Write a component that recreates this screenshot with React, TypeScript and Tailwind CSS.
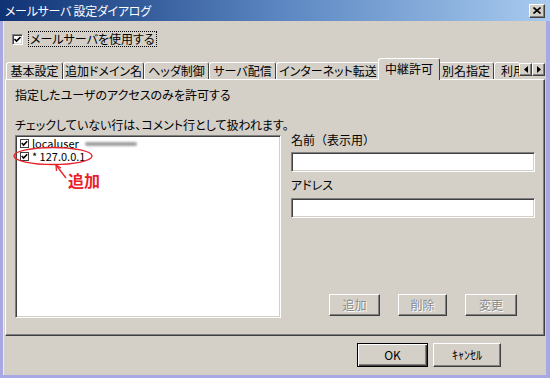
import React from "react";

const raised =
  "border border-t-white border-l-white border-r-[#404040] border-b-[#404040] shadow-[inset_-1px_-1px_#808080]";
const sunken =
  "border border-t-[#808080] border-l-[#808080] border-r-white border-b-white shadow-[inset_1px_1px_#404040,inset_-1px_-1px_#d4d0c8]";

function Check() {
  return (
    <svg width="9" height="9" viewBox="0 0 9 9" className="shrink-0">
      <rect x="0.5" y="0.5" width="8" height="8" fill="#fff" stroke="#404040" />
      <path d="M1.8 4 L3.6 6 L7.2 2.2" stroke="#000" strokeWidth="1.6" fill="none" />
    </svg>
  );
}

function Tab({ label, w, active }: { label: string; w: string; active?: boolean }) {
  if (active) {
    return (
      <div
        className={`${w} h-[22px] -mx-[2px] -mb-[1px] z-10 bg-[#d4d0c8] border-t border-l border-t-white border-l-white border-r border-r-[#404040] rounded-t-[3px] flex items-start justify-center pt-[3px] whitespace-nowrap`}
      >
        {label}
      </div>
    );
  }
  return (
    <div
      className={`${w} h-[17px] border-t border-l border-t-white border-l-white border-r border-r-[#404040] rounded-t-[3px] flex items-center justify-center overflow-hidden whitespace-nowrap`}
    >
      {label}
    </div>
  );
}

function Btn({ label, w, disabled, def }: { label: string; w: string; disabled?: boolean; def?: boolean }) {
  const cls = def
    ? "border border-black shadow-[inset_1px_1px_#fff,inset_-1px_-1px_#404040,inset_-2px_-2px_#808080]"
    : raised;
  return (
    <div
      className={`${w} h-full ${cls} flex items-center justify-center ${
        disabled ? "text-[#8a8a8a] [text-shadow:1px_1px_#fff]" : "text-black"
      }`}
    >
      {label}
    </div>
  );
}

export default function App() {
  return (
    <div className="w-[550px] h-[378px] bg-[#a8a8e4] pl-[3px] pr-[4px] pb-[3px] flex flex-col font-['Noto_Sans_CJK_JP','Noto_Sans',sans-serif] [font-feature-settings:'palt'] text-[12px] leading-[14px] text-black relative overflow-hidden">
      {/* title bar */}
      <div className="-ml-[3px] -mr-[4px] h-[21px] bg-gradient-to-r from-[#0f3274] via-[#5a85c0] to-[#a8cbef] flex items-center justify-between pl-[5px] pr-[5px]">
        <span className="text-white text-[12px] tracking-[-0.3px]">メールサーバ 設定ダイアログ</span>
        <div className={`w-[16px] h-[14px] bg-[#d4d0c8] ${raised} flex items-center justify-center`}>
          <svg width="8" height="7" viewBox="0 0 8 7">
            <path d="M0.5 0.5 L7.5 6.5 M7.5 0.5 L0.5 6.5" stroke="#000" strokeWidth="1.6" />
          </svg>
        </div>
      </div>

      <div className="flex-1 bg-[#d4d0c8] border-l border-l-[#ececec] flex flex-col">
        {/* use checkbox */}
        <div className="flex items-center mt-[10px] ml-[8px] gap-[5px] h-[16px]">
          <div className={`w-[11px] h-[11px] bg-white ${sunken} flex items-center justify-center`}>
            <svg width="7" height="7" viewBox="0 0 7 7">
              <path d="M0.5 3 L2.5 5 L6.5 1" stroke="#000" strokeWidth="1.6" fill="none" />
            </svg>
          </div>
          <span className="border border-dotted border-black px-[1px] leading-[14px]">メールサーバを使用する</span>
        </div>

        {/* tabs */}
        <div className="flex items-end mt-[11px] ml-[2px] h-[21px]">
          <Tab label="基本設定" w="w-[57px]" />
          <Tab label="追加ドメイン名" w="w-[81px]" />
          <Tab label="ヘッダ制御" w="w-[65px]" />
          <Tab label="サーバ配信" w="w-[67px]" />
          <Tab label="インターネット転送" w="w-[104px]" />
          <Tab label="中継許可" w="w-[62px]" active />
          <Tab label="別名指定" w="w-[56px]" />
          <div className="w-[25px] h-[17px] border-t border-l border-t-white border-l-white rounded-tl-[3px] overflow-hidden whitespace-nowrap flex items-center pl-[6px]">
            利用
          </div>
          <div className="flex mb-[3px]">
            <div className={`w-[13px] h-[13px] ${raised} bg-[#d4d0c8] flex items-center justify-center`}>
              <svg width="4" height="7" viewBox="0 0 4 7">
                <path d="M4 0 L0 3.5 L4 7 Z" fill="#000" />
              </svg>
            </div>
            <div className={`w-[13px] h-[13px] ${raised} bg-[#d4d0c8] flex items-center justify-center`}>
              <svg width="4" height="7" viewBox="0 0 4 7">
                <path d="M0 0 L4 3.5 L0 7 Z" fill="#000" />
              </svg>
            </div>
          </div>
        </div>

        {/* tab panel */}
        <div className="ml-[1px] mr-[1px] h-[257px] border border-t-white border-l-white border-r-[#404040] border-b-[#404040] shadow-[inset_-1px_-1px_#808080] flex flex-col pl-[9px] pr-[9px]">
          <div className="mt-[8px]">指定したユーザのアクセスのみを許可する</div>
          <div className="mt-[16px]">チェックしていない行は、コメント行として扱われます。</div>
          <div className="flex mt-[3px] gap-[10px]">
            <div className={`w-[267px] h-[183px] bg-white ${sunken} pt-[1px] pl-[4px] flex flex-col`}>
              <div className="flex items-center gap-[3px] h-[13px]">
                <Check />
                <span className="text-[11px] leading-[11px]">localuser</span>
                <span className="ml-[3px] w-[52px] h-[4px] rounded-full bg-[#a0a0a0] blur-[1px]" />
              </div>
              <div className="flex items-center gap-[3px] h-[13px]">
                <Check />
                <span className="text-[11px] leading-[11px]">* 127.0.0.1</span>
              </div>
            </div>
            <div className="flex-1 flex flex-col">
              <div className="-mt-[2px] [font-feature-settings:normal]">名前（表示用）</div>
              <div className={`mt-[5px] h-[20px] w-[244px] bg-white ${sunken}`} />
              <div className="mt-[6px]">アドレス</div>
              <div className={`mt-[6px] h-[20px] w-[244px] bg-white ${sunken}`} />
              <div className="mt-auto mb-[2px] h-[22px] flex ml-[38px] gap-[18px]">
                <Btn label="追加" w="w-[51px]" disabled />
                <Btn label="削除" w="w-[49px]" disabled />
                <Btn label="変更" w="w-[52px]" disabled />
              </div>
            </div>
          </div>
        </div>

        {/* bottom buttons */}
        <div className="flex justify-end gap-[5px] mt-[7px] mr-[45px] h-[24px]">
          <Btn label="OK" w="w-[71px]" def />
          <Btn label="ｷｬﾝｾﾙ" w="w-[68px]" />
        </div>
      </div>

      {/* red annotation */}
      <svg className="absolute left-0 top-0 pointer-events-none" width="550" height="378">
        <ellipse cx="53" cy="156" rx="39" ry="8.5" fill="none" stroke="#e8202a" strokeWidth="1.3" />
        <path d="M66 178 L56 165" stroke="#e8202a" strokeWidth="1.3" />
        <path d="M56 165 L56.5 171 M56 165 L61 168" stroke="#e8202a" strokeWidth="1.3" fill="none" />
      </svg>
      <div className="absolute left-[68px] top-[171px] text-[16px] leading-[18px] font-bold text-[#e8202a]">追加</div>
    </div>
  );
}
